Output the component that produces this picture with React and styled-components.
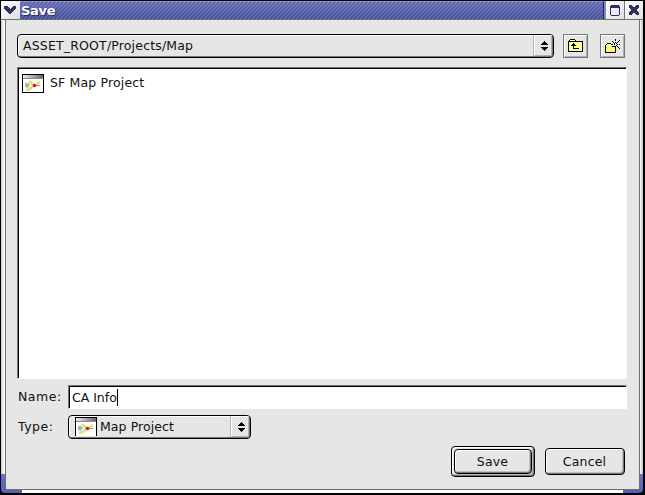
import React from 'react';
import styled, { createGlobalStyle } from 'styled-components';

const GlobalStyle = createGlobalStyle`
  * { box-sizing: border-box; }
  body { margin: 0; background: #000; }
  svg { display: block; flex: none; shape-rendering: crispEdges; }
`;

const Window = styled.div`
  width: 645px;
  height: 495px;
  display: flex;
  flex-direction: column;
  padding: 1px 2px 2px 1px;
  background: #000;
  border-radius: 3px 3px 6px 6px;
  overflow: hidden;
  font: 12.5px 'DejaVu Sans', sans-serif;
  color: #101010;
`;

const TitleBar = styled.header`
  display: flex;
  flex: none;
  height: 19px;
  border-bottom: 1px solid #707070;
`;

const Title = styled.h1`
  flex: 1;
  margin: 0;
  padding-left: 1px;
  border-top: 1px solid #8c90cc;
  border-right: 1px solid #20244c;
  background:
    repeating-linear-gradient(135deg, rgba(150, 165, 205, 0.5) 0 1px, transparent 1px 2.83px),
    linear-gradient(#666bb5, #454e9b);
  color: #fff;
  font-size: 13px;
  font-weight: bold;
  line-height: 17px;
  letter-spacing: -0.3px;
  text-shadow: 1px 1px 1px #222858;
`;

const TitleButton = styled.button`
  width: ${(p) => p.$width}px;
  height: 18px;
  padding: 0;
  border: 0;
  border-left: ${(p) => p.$edge || 0}px solid #777;
  background: linear-gradient(135deg, #fff, #dedee6);
`;

const TitleGap = styled.span`
  width: 2px;
  background: #8589bf;
`;

const Frame = styled.div`
  flex: 1;
  display: flex;
  padding: 0 3px 3px 4px;
  border-radius: 0 0 4px 4px;
  background:
    linear-gradient(#6972c6, #5660b6) 0 100% / 21px 19px no-repeat,
    linear-gradient(#6972c6, #5660b6) 100% 100% / 20px 19px no-repeat,
    linear-gradient(90deg, #c8c8c8, #fff 3px, #fff 639px, #bbb);
`;

const Content = styled.main`
  flex: 1;
  display: flex;
  flex-direction: column;
  border: solid #6d6d6d;
  border-width: 0 1px 1px;
  padding: 14px 12px 0 11px;
  background: #e6e6e6;
`;

const PathRow = styled.div`
  display: flex;
  align-items: flex-start;
  height: 33px;
`;

const Select = styled.div`
  display: flex;
  align-items: center;
  width: ${(p) => p.$width}px;
  height: 24px;
  padding: 0 1px 1px ${(p) => p.$pad || 5}px;
  border: 1px solid #000;
  border-radius: 4px;
  box-shadow: inset 1px 1px #fff, inset -1px -1px #777;
  white-space: nowrap;
  overflow: hidden;
`;

const SelectText = styled.span`
  flex: 1;
  padding-left: ${(p) => p.$indent || 0}px;
  letter-spacing: ${(p) => p.$spacing}px;
  line-height: 20px;
`;

const Stepper = styled.span`
  width: 18px;
  height: 100%;
  display: flex;
  align-items: center;
  justify-content: center;
  padding: 1px 0 0 2px;
  border: 1px solid #fff;
  border-right-color: #b0b0b0;
  border-bottom-color: #b0b0b0;
  box-shadow: -1px 0 #b8b8b8;
`;

const ToolButton = styled.button`
  width: 25px;
  height: 24px;
  margin-left: ${(p) => p.$gap}px;
  padding: 0;
  border: 1px solid #777;
  background: #e6e6e6;
  box-shadow: inset 1px 1px #fff, inset -1px -1px #b0b0b0;
`;

const FileList = styled.div`
  width: 610px;
  height: 312px;
  border: 1px solid #777;
  border-right-color: #f8f8f8;
  border-bottom-color: #fff;
  box-shadow: inset 1px 1px #000;
  background: #fff;
`;

const FileItem = styled.div`
  display: flex;
  align-items: center;
  gap: 6px;
  height: 24px;
  padding-left: 4px;
  margin-top: 3px;
  line-height: 20px;
  letter-spacing: 0.15px;
`;

const Field = styled.label`
  display: flex;
  align-items: center;
  height: 24px;
  margin-top: 6px;
`;

const Label = styled.span`
  width: 51px;
  flex: none;
  padding: 0 0 2px 1px;
  letter-spacing: 0.5px;
`;

const NameInput = styled.span`
  display: flex;
  align-items: center;
  width: 559px;
  height: 24px;
  padding: 1px 0 0 3px;
  border: 1px solid #777;
  border-right-color: #fff;
  border-bottom-color: #fff;
  box-shadow: inset 1px 1px #000;
  background: #fff;
  letter-spacing: -0.02px;
`;

const Caret = styled.i`
  width: 1px;
  height: 17px;
  background: #000;
`;

const Actions = styled.footer`
  display: flex;
  align-items: center;
  justify-content: flex-end;
  gap: 10px;
  margin: 7px 2px 0 0;
`;

const DefaultRing = styled.div`
  padding: 2px;
  border: 1px solid #000;
  border-radius: 4px;
  box-shadow: inset 1px 1px #fff, inset -1px -1px #777, inset -2px -2px #b8b8b8;
`;

const Button = styled.button`
  display: block;
  width: ${(p) => p.$width}px;
  height: ${(p) => p.$height}px;
  padding: 0 1px ${(p) => p.$lift || 0}px 0;
  border: 1px solid #000;
  border-radius: 4px;
  background: #e6e6e6;
  box-shadow: inset 1px 1px #fff, inset -1px -1px #777, inset -2px -2px #c0c0c0;
  color: inherit;
  font: inherit;
  letter-spacing: 0.2px;
`;

const MenuIcon = () => (
  <svg width="18" height="18">
    <path fill="#2d3160" d="M3 5h4v1h1v1h1v1h1V7h1V6h1V5h3v3h-1v1h-1v1h-1v1h-1v1h-1v1H8v-1H7v-1H6v-1H5V9H4V8H3z" />
  </svg>
);

const MaximizeIcon = () => (
  <svg width="18" height="18">
    <path fill="#2d3160" fillRule="evenodd" d="M5 4h8v1h1v9h-1v1H5v-1H4V5h1zM5 7v7h8V7z" />
  </svg>
);

const CloseIcon = () => (
  <svg width="18" height="18">
    <path fill="#2d3160" d="M4 4h3v1h1v1h2V5h1V4h3v3h-1v1h-1v2h1v1h1v3h-3v-1h-1v-1H8v1H7v1H4v-3h1v-1h1V8H5V7H4z" />
  </svg>
);

const Arrows = () => (
  <svg width="7" height="11">
    <path d="M3 0h1v1h1v1h1v1h1v1H0V3h1V2h1V1h1zM0 6h7v1H6v1H5v1H4v1H3V9H2V8H1V7H0z" />
  </svg>
);

const MapIcon = ({ frame = 18 }) => (
  <svg width="22" height="19">
    <defs>
      <linearGradient id="caption" gradientUnits="userSpaceOnUse" x1="1" x2="21" y1="0" y2="0">
        <stop offset="0" stopColor="#eee" />
        <stop offset="1" stopColor="#666" />
      </linearGradient>
    </defs>
    <path fill="#000" d="M0 0h22v19H0z" />
    <path fill="#fff" d={`M1 1h20v${frame - 1}H1z`} />
    <path fill="url(#caption)" d="M1 1h20v3H1z" />
    <path fill="#888" d="M1 4h20v1H1z" />
    <g shapeRendering="auto" fill="none">
      <path stroke="#e4dd77" strokeWidth="2.500" d="M7 7l4 4h2M18 8l-4 3M11 12l-3 3-4 1" />
      <path fill="#8dbfc4" d="M3 9h3l2 2-2 3-3-1z" />
      <path stroke="#999" d="M14 11.500h4" />
      <circle cx="12.500" cy="11.500" r="1.800" fill="#c5202c" />
    </g>
  </svg>
);

const UpFolderIcon = () => (
  <svg width="23" height="22">
    <path fill="#000" d="M5 5h1V4h5v1h1v1h7v11H4V6h1z" />
    <path fill="#ffffa0" d="M6 5h5v1H6zM5 7h13v9H5z" />
    <path fill="#000" d="M9 8h1v1h1v1h1v1h-2v2h5v1H9v-3H7v-1h1V9h1z" />
  </svg>
);

const NewFolderIcon = () => {
  const dots = [];
  for (let y = 11; y < 17; y += 1) {
    for (let x = 5; x < 14; x += 1) if ((x + y) % 2) dots.push(`M${x} ${y}h1v1h-1z`);
  }
  return (
    <svg width="23" height="22">
      <path fill="#000" d="M5 9h1V8h4v1h1v1h4v8H4v-8h1z" />
      <path fill="#ffffb0" d="M6 9h4v1h4v7H5v-7h1z" />
      <path fill="#f5ed31" d={dots.join('')} />
      <path fill="#e6e6e6" d="M12 9h3v2h-3z" />
      <path fill="#000" d="M14 4h1v2h-1zM14 7h1v1h-1zM11 6h1v1h-1zM12 7h1v1h-1zM13 8h1v1h-1zM15 8h1v1h-1zM16 7h1v1h-1zM17 6h1v1h-1zM18 5h1v1h-1zM10 9h2v1h-2zM13 9h1v1h-1zM16 9h1v1h-1zM18 9h1v1h-1zM11 11h3v1h-3zM15 10h1v1h-1zM16 11h1v1h-1zM17 12h1v1h-1zM18 13h1v1h-1zM14 11h1v4h-1z" />
    </svg>
  );
};

export default function App() {
  return (
    <>
      <GlobalStyle />
      <Window>
        <TitleBar>
          <TitleButton $width={19} aria-label="Window menu"><MenuIcon /></TitleButton>
          <Title>Save</Title>
          <TitleGap />
          <TitleButton $width={18} aria-label="Maximize"><MaximizeIcon /></TitleButton>
          <TitleButton $width={19} $edge={1} aria-label="Close"><CloseIcon /></TitleButton>
        </TitleBar>
        <Frame>
          <Content>
            <PathRow>
              <Select $width={537}>
                <SelectText $spacing={0.17}>ASSET_ROOT/Projects/Map</SelectText>
                <Stepper><Arrows /></Stepper>
              </Select>
              <ToolButton $gap={9} aria-label="Parent folder"><UpFolderIcon /></ToolButton>
              <ToolButton $gap={12} aria-label="New folder"><NewFolderIcon /></ToolButton>
            </PathRow>
            <FileList>
              <FileItem><MapIcon /><span>SF Map Project</span></FileItem>
            </FileList>
            <Field>
              <Label>Name:</Label>
              <NameInput>CA Info<Caret /></NameInput>
            </Field>
            <Field>
              <Label>Type:</Label>
              <Select $width={183} $pad={6}>
                <MapIcon frame={19} />
                <SelectText $indent={3} $spacing={0.08}>Map Project</SelectText>
                <Stepper><Arrows /></Stepper>
              </Select>
            </Field>
            <Actions>
              <DefaultRing><Button $width={78} $height={25}>Save</Button></DefaultRing>
              <Button $width={80} $height={27} $lift={1}>Cancel</Button>
            </Actions>
          </Content>
        </Frame>
      </Window>
    </>
  );
}
